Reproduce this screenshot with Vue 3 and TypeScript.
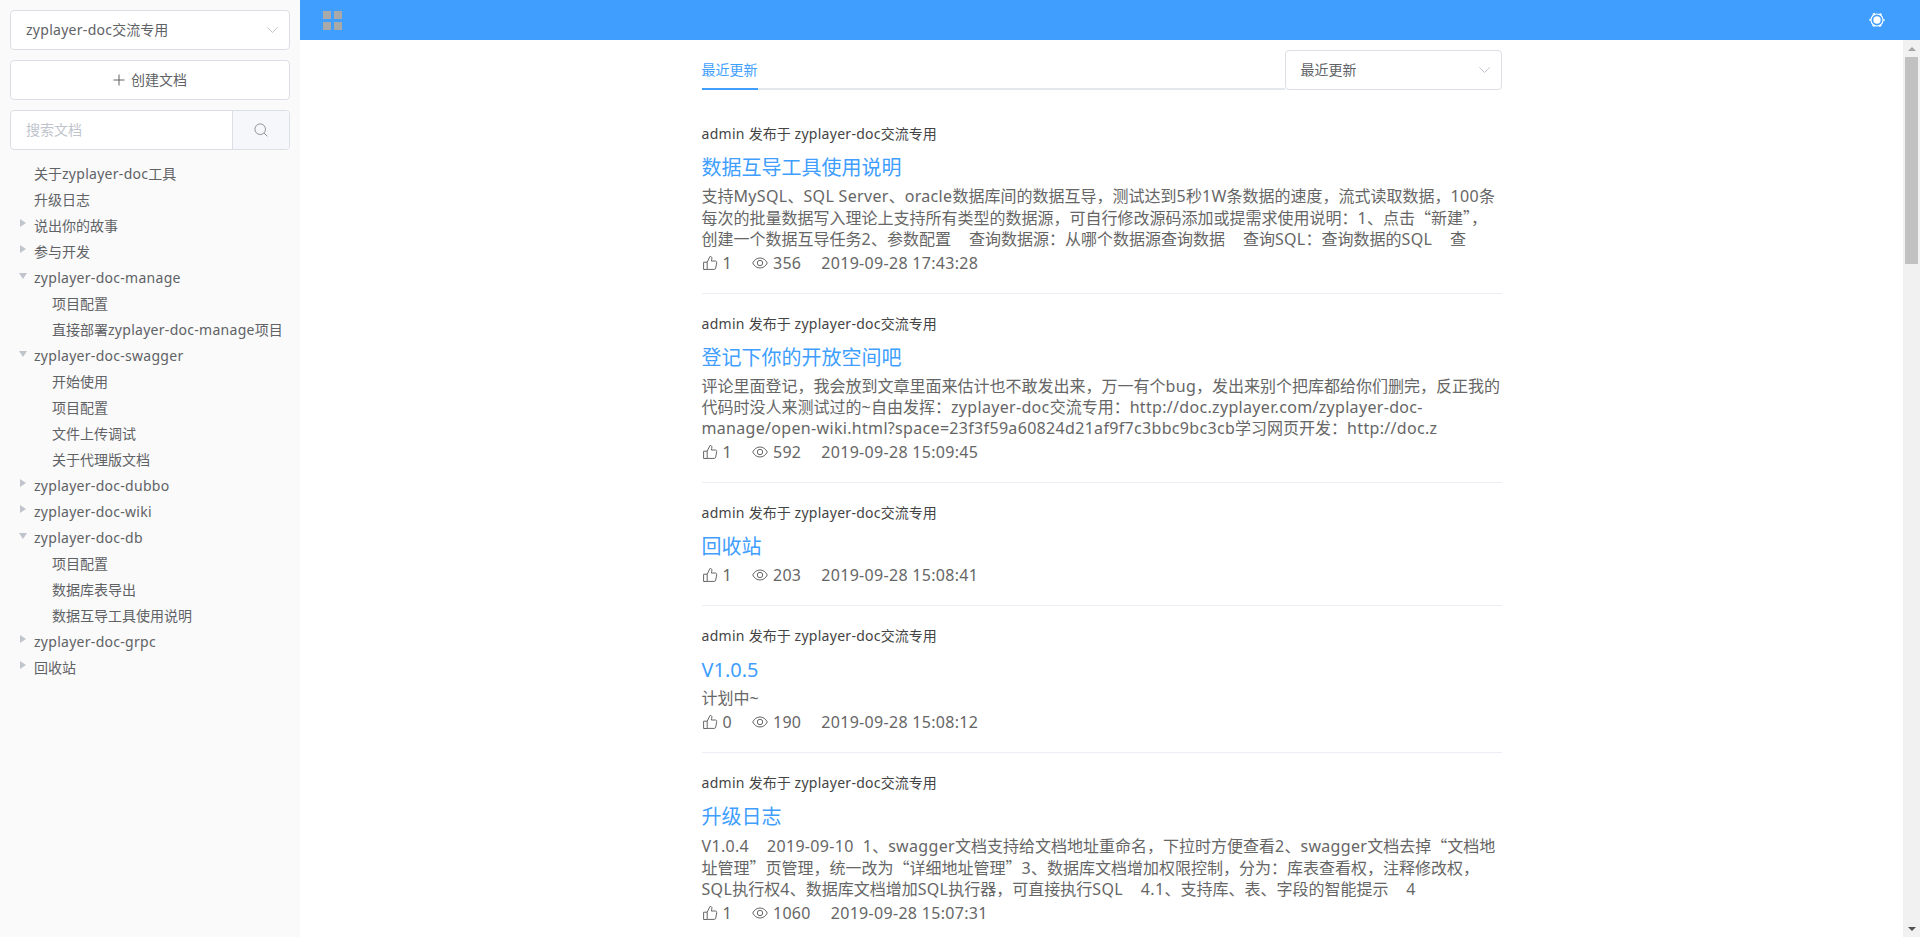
<script setup lang="ts">
import { computed } from 'vue'

interface TreeNode {
  label: string
  children?: TreeNode[]
  expanded?: boolean
}

interface Doc {
  title: string
  lines: string[]
  likes: number
  views: number
  time: string
}

const tree: TreeNode[] = [
  { label: '关于zyplayer-doc工具' },
  { label: '升级日志' },
  { label: '说出你的故事', children: [] },
  { label: '参与开发', children: [] },
  {
    label: 'zyplayer-doc-manage',
    expanded: true,
    children: [{ label: '项目配置' }, { label: '直接部署zyplayer-doc-manage项目' }],
  },
  {
    label: 'zyplayer-doc-swagger',
    expanded: true,
    children: [{ label: '开始使用' }, { label: '项目配置' }, { label: '文件上传调试' }, { label: '关于代理版文档' }],
  },
  { label: 'zyplayer-doc-dubbo', children: [] },
  { label: 'zyplayer-doc-wiki', children: [] },
  {
    label: 'zyplayer-doc-db',
    expanded: true,
    children: [{ label: '项目配置' }, { label: '数据库表导出' }, { label: '数据互导工具使用说明' }],
  },
  { label: 'zyplayer-doc-grpc', children: [] },
  { label: '回收站', children: [] },
]

const rows = computed(() => {
  const out: { label: string; level: number; caret: string }[] = []
  for (const n of tree) {
    out.push({ label: n.label, level: 0, caret: n.children ? (n.expanded ? 'down' : 'right') : 'none' })
    if (n.expanded) for (const c of n.children ?? []) out.push({ label: c.label, level: 1, caret: 'none' })
  }
  return out
})

const docs: Doc[] = [
  {
    title: '数据互导工具使用说明',
    lines: [
      '支持MySQL、SQL Server、oracle数据库间的数据互导，测试达到5秒1W条数据的速度，流式读取数据，100条',
      '每次的批量数据写入理论上支持所有类型的数据源，可自行修改源码添加或提需求使用说明：1、点击“新建”，',
      '创建一个数据互导任务2、参数配置\u00a0\u00a0\u00a0\u00a0查询数据源：从哪个数据源查询数据\u00a0\u00a0\u00a0\u00a0查询SQL：查询数据的SQL\u00a0\u00a0\u00a0\u00a0查',
    ],
    likes: 1,
    views: 356,
    time: '2019-09-28 17:43:28',
  },
  {
    title: '登记下你的开放空间吧',
    lines: [
      '评论里面登记，我会放到文章里面来估计也不敢发出来，万一有个bug，发出来别个把库都给你们删完，反正我的',
      '代码时没人来测试过的~自由发挥：zyplayer-doc交流专用：http://doc.zyplayer.com/zyplayer-doc-',
      'manage/open-wiki.html?space=23f3f59a60824d21af9f7c3bbc9bc3cb学习网页开发：http://doc.z',
    ],
    likes: 1,
    views: 592,
    time: '2019-09-28 15:09:45',
  },
  { title: '回收站', lines: [], likes: 1, views: 203, time: '2019-09-28 15:08:41' },
  { title: 'V1.0.5', lines: ['计划中~'], likes: 0, views: 190, time: '2019-09-28 15:08:12' },
  {
    title: '升级日志',
    lines: [
      'V1.0.4\u00a0\u00a0\u00a0\u00a02019-09-10\u00a0\u00a01、swagger文档支持给文档地址重命名，下拉时方便查看2、swagger文档去掉“文档地',
      '址管理”页管理，统一改为“详细地址管理”3、数据库文档增加权限控制，分为：库表查看权，注释修改权，',
      'SQL执行权4、数据库文档增加SQL执行器，可直接执行SQL\u00a0\u00a0\u00a0\u00a04.1、支持库、表、字段的智能提示\u00a0\u00a0\u00a0\u00a04',
    ],
    likes: 1,
    views: 1060,
    time: '2019-09-28 15:07:31',
  },
]

// Latin runs are set slightly wider; curly quotes take the full-width CJK glyph.
function runs(text: string): { t: string; cls: string }[] {
  return text
    .split(/([\x20-\x7e\u00a0]+|[“”]+)/)
    .filter(Boolean)
    .map((t) => ({ t, cls: /^[“”]/.test(t) ? 'quote' : /^[\x20-\x7e\u00a0]/.test(t) ? 'latin' : '' }))
}
</script>

<template>
  <div class="page">
    <aside class="aside">
      <div class="select">
        <span class="select-text"><span v-for="(p, i) in runs('zyplayer-doc交流专用')" :key="i" :class="p.cls">{{ p.t }}</span></span>
        <svg class="chevron" viewBox="0 0 11 6"><path d="M.4.4 5.500 5.500 10.600.4" /></svg>
      </div>
      <button class="create" type="button">
        <svg class="plus" viewBox="0 0 12 12"><path d="M6 .5v11M.5 6h11" /></svg>
        <span class="select-text">创建文档</span>
      </button>
      <div class="search">
        <span class="placeholder">搜索文档</span>
        <span class="append">
          <svg class="search-icon" viewBox="0 0 14 14">
            <circle cx="6.2" cy="6.2" r="5.3" />
            <path d="m10 10 3.4 3.4" />
          </svg>
        </span>
      </div>
      <ul class="tree">
        <li v-for="(r, i) in rows" :key="i" class="tree-row" :class="'lv' + r.level">
          <i class="caret" :class="r.caret"></i>
          <span class="tree-label"><span v-for="(p, j) in runs(r.label)" :key="j" :class="p.cls">{{ p.t }}</span></span>
        </li>
      </ul>
    </aside>

    <section class="main">
      <header class="bar">
        <span class="grid-icon"><i></i><i></i><i></i><i></i></span>
        <svg class="gear" viewBox="0 0 16 16">
          <circle class="gear-ring" cx="8" cy="8" r="6" />
          <circle class="gear-teeth" cx="8" cy="8" r="6.900" />
          <circle class="gear-hub" cx="8" cy="8" r="3.700" />
        </svg>
      </header>

      <div class="body">
        <div class="scroller">
          <div class="column">
            <div class="tabs">
              <div class="tab-line"><span class="tab">最近更新</span></div>
              <div class="select sort">
                <span class="select-text">最近更新</span>
                <svg class="chevron" viewBox="0 0 11 6"><path d="M.4.4 5.500 5.500 10.600.4" /></svg>
              </div>
            </div>

            <article v-for="d in docs" :key="d.title" class="doc">
              <div class="meta"><span v-for="(p, i) in runs('admin 发布于 zyplayer-doc交流专用')" :key="i" :class="p.cls">{{ p.t }}</span></div>
              <a class="title">{{ d.title }}</a>
              <div v-if="d.lines.length" class="desc">
                <div v-for="(l, i) in d.lines" :key="i" class="desc-line"><span v-for="(p, j) in runs(l)" :key="j" :class="p.cls">{{ p.t }}</span></div>
              </div>
              <div class="stats">
                <span class="stat">
                  <svg class="icon" viewBox="0 0 16 16">
                    <path
                      d="M5.200 7.200 7.900 1.600c.9-.4 2 .2 2 1.300 0 1-.4 2.200-.6 3.100h4.100c.9 0 1.500.8 1.300 1.700l-1 5.500c-.1.7-.7 1.200-1.400 1.200H5.200zM5.200 7.200H1.600v7.300h3.600"
                    />
                  </svg>
                  {{ d.likes }}
                </span>
                <span class="stat">
                  <svg class="icon eye" viewBox="0 0 16 12">
                    <path d="M.7 6C2.400 2.700 5 1 8 1s5.600 1.700 7.300 5c-1.700 3.300-4.300 5-7.300 5S2.400 9.300.7 6z" />
                    <circle cx="8" cy="6" r="2.700" />
                  </svg>
                  {{ d.views }}
                </span>
                <span class="time">{{ d.time }}</span>
              </div>
            </article>
          </div>
        </div>

        <div class="rail">
          <span class="rail-btn"><i class="arrow-up"></i></span>
          <span class="rail-thumb"></span>
          <span class="rail-track"></span>
          <span class="rail-btn"><i class="arrow-down"></i></span>
        </div>
      </div>
    </section>
  </div>
</template>

<style>
html,
body {
  margin: 0;
  height: 100%;
  overflow: hidden;
}
</style>

<style scoped>
.page {
  display: flex;
  height: 937px;
  font-family: 'Noto Sans', 'Noto Sans CJK SC', sans-serif;
  font-size: 14px;
  color: #606266;
  background: #fff;
}

.latin {
  letter-spacing: 0.02em;
}

.quote {
  font-family: 'Noto Sans CJK SC', sans-serif;
}

.aside {
  width: 300px;
  flex: none;
  box-sizing: border-box;
  padding: 10px 10px 0;
  background: #fafafa;
  overflow: hidden;
}

.select {
  display: flex;
  align-items: center;
  justify-content: space-between;
  box-sizing: border-box;
  height: 40px;
  padding: 0 11px 0 15px;
  border: 1px solid #dcdfe6;
  border-radius: 4px;
  background: #fff;
}

.select-text {
  margin-bottom: 2px;
}

.chevron {
  width: 11px;
  height: 6px;
  fill: none;
  stroke: #c0c4cc;
  stroke-width: 1;
}

.create {
  display: flex;
  align-items: center;
  justify-content: center;
  gap: 6px;
  box-sizing: border-box;
  width: 100%;
  height: 40px;
  margin-top: 10px;
  padding: 0;
  border: 1px solid #dcdfe6;
  border-radius: 4px;
  background: #fff;
  color: #606266;
  font: inherit;
}

.plus {
  width: 12px;
  height: 12px;
  fill: none;
  stroke: #606266;
  stroke-width: 1;
}

.search {
  display: flex;
  box-sizing: border-box;
  height: 40px;
  margin-top: 10px;
  border: 1px solid #dcdfe6;
  border-radius: 4px;
  background: #fff;
  overflow: hidden;
}

.placeholder {
  flex: 1;
  padding-left: 15px;
  line-height: 38px;
  color: #c0c4cc;
}

.append {
  display: flex;
  align-items: center;
  justify-content: center;
  width: 56px;
  border-left: 1px solid #dcdfe6;
  background: #f5f7fa;
}

.search-icon {
  width: 14px;
  height: 14px;
  fill: none;
  stroke: #909399;
  stroke-width: 1;
}

.tree {
  list-style: none;
  margin: 10px 0 0 -10px;
  padding: 0;
}

.tree-row {
  display: flex;
  align-items: center;
  height: 26px;
  white-space: nowrap;
}

.lv0 {
  padding-left: 19px;
}

.lv1 {
  padding-left: 37px;
}

.caret {
  width: 15px;
  flex: none;
  display: flex;
  height: 12px;
}

.caret.right::before {
  content: '';
  margin: 0 0 0 1px;
  border-left: 6px solid #c0c4cc;
  border-top: 4.500px solid transparent;
  border-bottom: 4.500px solid transparent;
  height: 0;
}

.caret.down::before {
  content: '';
  margin: 2px 0 0 0;
  border-top: 6px solid #c0c4cc;
  border-left: 4.500px solid transparent;
  border-right: 4.500px solid transparent;
  height: 0;
}

.main {
  flex: 1;
  min-width: 0;
  display: flex;
  flex-direction: column;
}

.bar {
  flex: none;
  height: 40px;
  display: flex;
  align-items: center;
  justify-content: space-between;
  padding: 0 35px 0 23px;
  background: #409eff;
}

.grid-icon {
  display: grid;
  grid-template-columns: 8px 8px;
  grid-auto-rows: 8px;
  gap: 3px;
}

.grid-icon i {
  background: #a9a9a9;
}

.gear {
  width: 16px;
  height: 16px;
  fill: none;
}

.gear-ring {
  stroke: #fff;
  stroke-width: 1.100;
}

.gear-teeth {
  stroke: #fff;
  stroke-width: 1.300;
  stroke-dasharray: 2.400 4.827;
  stroke-dashoffset: 1.200;
}

.gear-hub {
  fill: #fff;
}

.body {
  flex: 1;
  min-height: 0;
  display: flex;
}

.scroller {
  flex: 1;
  min-width: 0;
  overflow: hidden;
}

.rail {
  flex: none;
  width: 17px;
  display: flex;
  flex-direction: column;
  background: #f1f1f1;
}

.rail-btn {
  flex: none;
  height: 17px;
  display: flex;
  align-items: center;
  justify-content: center;
}

.arrow-up {
  border-bottom: 4px solid #a3a3a3;
  border-left: 4px solid transparent;
  border-right: 4px solid transparent;
}

.arrow-down {
  border-top: 4px solid #505050;
  border-left: 4px solid transparent;
  border-right: 4px solid transparent;
}

.rail-thumb {
  flex: none;
  height: 207px;
  margin: 0 2px;
  background: #c1c1c1;
}

.rail-track {
  flex: 1;
}

.column {
  width: 800px;
  margin: 0 auto;
}

.tabs {
  display: flex;
  align-items: flex-end;
  padding-top: 10px;
  margin-bottom: 14px;
}

.tab-line {
  flex: 1;
  height: 40px;
  box-sizing: border-box;
  border-bottom: 2px solid #e4e7ed;
}

.tab {
  display: inline-block;
  box-sizing: border-box;
  height: 40px;
  line-height: 40px;
  color: #409eff;
  border-bottom: 2px solid #409eff;
}

.sort {
  width: 217px;
  flex: none;
}

.doc {
  padding: 20px 0 19px;
  border-bottom: 1px solid #ebeef5;
}

.meta {
  font-size: 14px;
  line-height: 20px;
  color: #444;
}

.title {
  display: block;
  margin-top: 9px;
  font-size: 20px;
  line-height: 30px;
  color: #409eff;
}

.desc {
  margin: 3px 0 1px;
  font-size: 16px;
  line-height: 21px;
  color: #666;
}

.desc-line {
  white-space: nowrap;
}

.stats {
  display: flex;
  align-items: center;
  height: 22px;
  margin-top: 2px;
  font-size: 16px;
  letter-spacing: 0.3px;
  color: #666;
}

.stat {
  display: inline-flex;
  align-items: center;
  gap: 5px;
  margin-right: 20px;
}

.icon {
  width: 16px;
  height: 16px;
  fill: none;
  stroke: #666;
  stroke-width: 1;
}

.icon.eye {
  height: 12px;
}
</style>
